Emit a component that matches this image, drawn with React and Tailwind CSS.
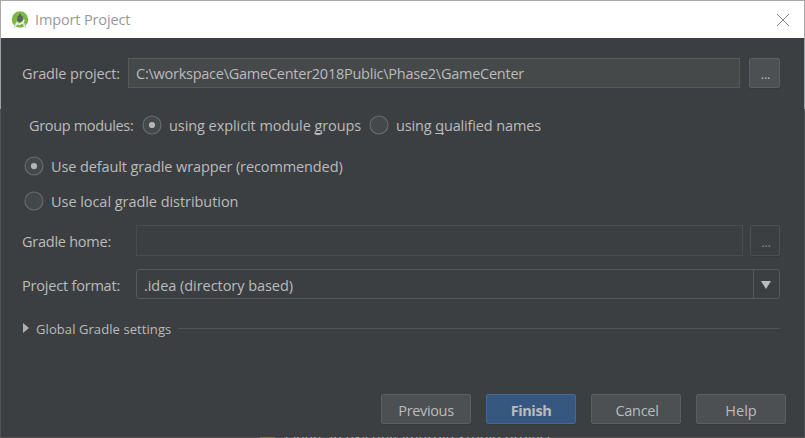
const face = "font-['Open_Sans','Noto_Sans',sans-serif]";

function Radio({ checked }) {
  return (
    <svg className="block h-5 w-5 shrink-0" viewBox="0 0 20 20">
      <circle cx="10" cy="10" r="9" fill="#43494a" stroke="#6b6e6f" strokeWidth="1.1" />
      {checked && <circle cx="10" cy="10" r="3.1" fill="#b4b4b4" />}
    </svg>
  );
}

function Label({ className = "", children }) {
  return <span className={"block shrink-0 whitespace-nowrap leading-5 " + className}>{children}</span>;
}

function Mnemonic({ children }) {
  return <span className="underline decoration-1 underline-offset-2 [text-decoration-skip-ink:none]">{children}</span>;
}

function Button({ className = "", children }) {
  return (
    <button
      className={
        "flex h-[30px] w-[90px] items-center justify-center rounded-[2px] border pt-[3px] leading-5 shadow-[0_1px_0_#35383a] " +
        className
      }
    >
      {children}
    </button>
  );
}

function Logo() {
  return (
    <svg className="block h-[18px] w-[18px]" viewBox="0 0 18 18">
      <circle cx="9" cy="8.5" r="8.3" fill="#7cb843" />
      <path d="M5.6 10.5 2 17h2.2l3-5.4zM12.4 10.5 16 17h-2.2l-3-5.4z" fill="#dde1dc" />
      <path d="M5 12.4c3 1.6 6.6.6 8.2-3.6" fill="none" stroke="#ffffff" strokeWidth="1.4" />
      <path d="M8.1 3h1.8v1.3l1.8 1.5v3.6L9.9 10.8H8.1L6.3 9.4V5.8l1.8-1.5z" fill="#50615b" />
      <circle cx="9" cy="7" r="0.8" fill="#78916a" />
    </svg>
  );
}

export default function App() {
  return (
    <div className={"flex h-[438px] w-[805px] flex-col overflow-hidden bg-[#3c3f41] text-[14.5px] text-[#bbbbbb] " + face}>
      <div className="h-px shrink-0 bg-[#a8a8a8]" />
      <header className="flex h-[37px] shrink-0 items-center border-l border-r border-[#a8a8a8] bg-white pl-[10px] pr-[15px] text-[#999999]">
        <Logo />
        <Label className="ml-[6px] tracking-[-0.14px]">Import Project</Label>
        <svg className="ml-auto block h-3 w-3" viewBox="0 0 12 12" stroke="#858585" strokeWidth="1">
          <path d="M0 0 12 12M12 0 0 12" />
        </svg>
      </header>
      <div className="flex min-h-0 flex-1">
        <div className="flex w-px shrink-0 flex-col bg-[#505355]">
          <div className="h-[71px] bg-[#a0a0a0]" />
        </div>
        <main className="flex min-w-0 flex-1 flex-col">
          <div className="mt-5 flex h-[30px] items-center pl-[21px]">
            <Label className="w-[106px] pt-[2px] tracking-[-0.15px]">Gradle project:</Label>
            <div className="flex h-[30px] w-[612px] items-center border border-[#565a5b] bg-[#45494a] pl-[7px]">
              <Label className="pt-[2px] tracking-[-0.25px]">C:\workspace\GameCenter2018Public\Phase2\GameCenter</Label>
            </div>
            <button className="ml-[9px] flex h-[30px] w-[31px] items-center justify-center rounded-[2px] border border-[#5b5f61] bg-[#4c5052] pl-[2px] pt-[3px] text-[13px] tracking-[-0.3px] shadow-[0_1px_0_#35383a]">
              ...
            </button>
          </div>
          <div className="mt-[27px] flex h-5 items-center pl-[28px]">
            <Label className="w-[113px] pt-[2px] tracking-[-0.34px]">Group modules:</Label>
            <Radio checked />
            <Label className="ml-[7px] w-[200px] pt-[2px] tracking-[-0.07px]">
              using explicit module <Mnemonic>g</Mnemonic>roups
            </Label>
            <Radio />
            <Label className="ml-[7px] pt-[2px] tracking-[-0.14px]">
              using <Mnemonic>q</Mnemonic>ualified names
            </Label>
          </div>
          <div className="mt-[21px] flex h-5 items-center pl-[23px]">
            <Radio checked />
            <Label className="ml-[7px] pt-[2px] tracking-[-0.11px]">Use default gradle wrapper (recommended)</Label>
          </div>
          <div className="mt-[15px] flex h-5 items-center pl-[23px]">
            <Radio />
            <Label className="ml-[7px] pt-[2px] tracking-[-0.05px]">Use local gradle distribution</Label>
          </div>
          <div className="mt-[14px] flex h-[31px] items-center pl-[21px]">
            <Label className="w-[114px] pt-[2px] tracking-[-0.25px]">Gradle home:</Label>
            <div className="h-[31px] w-[607px] border border-[#494c4e]" />
            <button className="ml-[7px] flex h-[31px] w-[30px] items-center justify-center rounded-[2px] border border-[#4e5153] pl-[2px] pt-[5px] text-[13px] tracking-[-0.3px] text-[#888888] shadow-[0_1px_0_#35383a]">
              ...
            </button>
          </div>
          <div className="mt-[13px] flex h-[30px] items-center pl-[21px]">
            <Label className="w-[114px] pt-[3px] tracking-[-0.2px]">Project format:</Label>
            <div className="flex h-[30px] w-[644px] items-stretch rounded-[3px] border border-[#56595b]">
              <div className="flex flex-1 items-center pl-[7px]">
                <Label className="pt-[3px] tracking-[-0.05px]">.idea (directory based)</Label>
              </div>
              <div className="flex w-[26px] items-center border-l border-[#56595b] pl-[7px] pt-[2px]">
                <svg className="block h-2 w-[10px]" viewBox="0 0 10 8">
                  <path d="M0 0h10L5 8z" fill="#bbbbbb" />
                </svg>
              </div>
            </div>
          </div>
          <div className="mt-[19px] flex h-5 items-center pl-[22px] text-[13px]">
            <svg className="block h-[10px] w-[6px]" viewBox="0 0 6 10">
              <path d="M0 0 6 5 0 10z" fill="#b0b0b0" />
            </svg>
            <Label className="ml-[7px] w-[142px] pt-[2px] tracking-[0.08px]">Global Gradle settings</Label>
            <div className="h-px w-[602px] bg-[#515456]" />
          </div>
          <div className="mt-14 flex gap-[15px] pl-[380px]">
            <Button className="border-[#5b5f61] bg-[#4c5052] tracking-[-0.35px]">Previous</Button>
            <Button className="border-[#42699a] bg-[#365880] font-bold tracking-[-0.4px]">Finish</Button>
            <Button className="border-[#5b5f61] bg-[#4c5052] pl-[2px] tracking-[-0.3px]">Cancel</Button>
            <Button className="border-[#5b5f61] bg-[#4c5052]">Help</Button>
          </div>
        </main>
        <div className="flex w-px shrink-0 flex-col bg-[#505355]">
          <div className="h-[71px] bg-[#a0a0a0]" />
        </div>
      </div>
      {/* Sliver of the welcome window showing below the dialog */}
      <div className="flex h-px shrink-0 items-start overflow-hidden bg-[#575355] pl-[260px]">
        <div className="h-px w-[15px] shrink-0 bg-[#8a7347]" />
        <Label className="-mt-[9px] ml-[10px] text-[14px] tracking-[0.16px] text-[#c4c4c4]">Open an existing Android Studio project</Label>
      </div>
    </div>
  );
}
